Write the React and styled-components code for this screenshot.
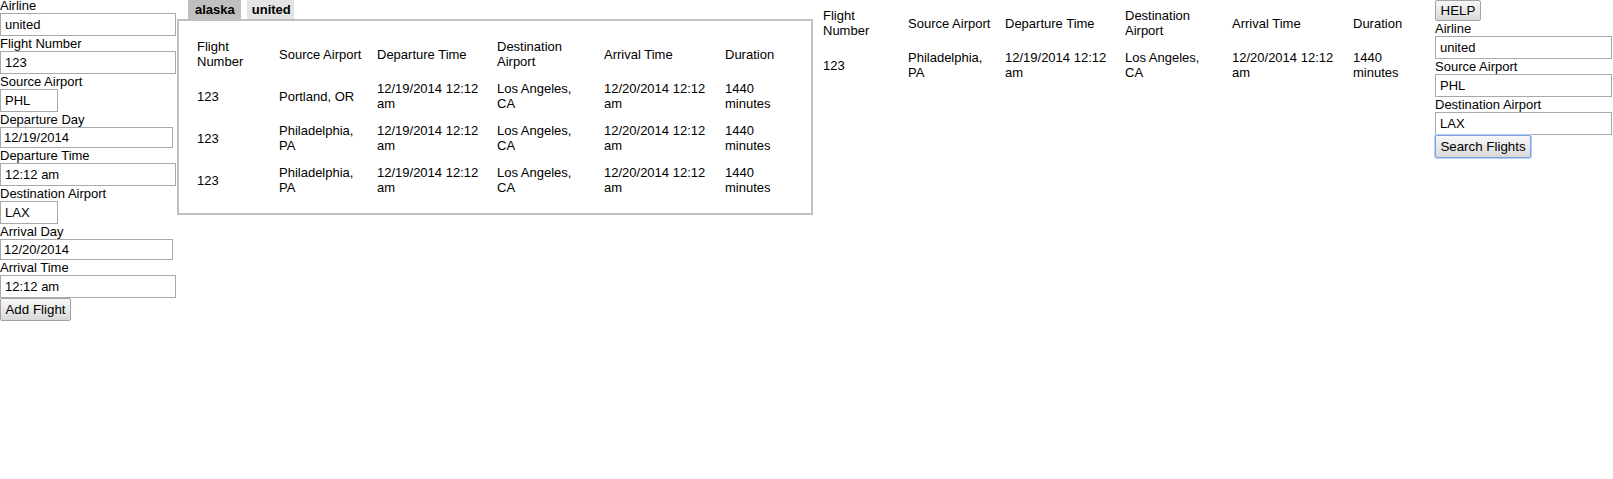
import React from "react";
import styled, { createGlobalStyle } from "styled-components";

const Global = createGlobalStyle`
  html, body { margin: 0; padding: 0; background: #fff; }
  body {
    font-family: "Liberation Sans", Arial, sans-serif;
    font-size: 13px;
    color: #000;
  }
`;

const Page = styled.div`
  display: flex;
  align-items: flex-start;
  width: 1613px;
`;

const FormColumn = styled.div`
  display: flex;
  flex-direction: column;
  align-items: flex-start;
  width: ${(p) => p.$width}px;
  margin-top: ${(p) => p.$top || 0}px;
  flex: none;
`;

const Label = styled.label`
  display: block;
  height: 15px;
  line-height: 15px;
  font-size: 13px;
  white-space: nowrap;
`;

const Input = styled.input`
  box-sizing: border-box;
  display: block;
  width: ${(p) => p.$w}px;
  height: ${(p) => p.$h || 23}px;
  margin: 0;
  padding: 0 ${(p) => p.$pad ?? 4}px;
  border: 1px solid #a9a9a9;
  border-radius: 0;
  background: #fff;
  font-family: "Liberation Sans", Arial, sans-serif;
  font-size: 13px;
  color: #000;
  outline: none;
`;

const Button = styled.button`
  box-sizing: border-box;
  height: ${(p) => p.$h || 22}px;
  width: ${(p) => p.$w}px;
  margin: 0;
  padding: 0;
  border: 1px solid ${(p) => (p.$focused ? "#7da2e0" : "#a3a3a3")};
  border-radius: 2px;
  background: linear-gradient(#f7f7f7, #e6e6e6 60%, #d8d8d8);
  box-shadow: ${(p) => (p.$focused ? "0 0 0 1px #b8cff2" : "none")};
  font-family: "Liberation Sans", Arial, sans-serif;
  font-size: 13.33px;
  color: #000;
  text-align: center;
`;

const TabWidget = styled.div`
  margin-left: 1px;
  width: 636px;
  flex: none;
`;

const TabBar = styled.div`
  display: flex;
  gap: 6px;
  padding-left: 11px;
  height: 19px;
`;

const Tab = styled.div`
  height: 19px;
  line-height: 19px;
  padding: 0 ${(p) => p.$pr}px 0 ${(p) => p.$pl}px;
  font-weight: bold;
  font-size: 13px;
  background: ${(p) => (p.$active ? "#bfbfbf" : "#e4e4e4")};
`;

const Panel = styled.div`
  border: 2px solid #c0c0c0;
  padding: 12px;
`;

const Table = styled.table`
  border-collapse: collapse;
  table-layout: fixed;
  width: ${(p) => p.$w}px;
  margin-top: ${(p) => p.$top || 0}px;
  margin-left: ${(p) => p.$left || 0}px;
  flex: none;
`;

const Cell = styled.td`
  padding: 6px;
  height: 30px;
  line-height: 15px;
  font-size: 13px;
  text-align: left;
  vertical-align: middle;
  font-weight: normal;
`;

const HeadCell = styled(Cell).attrs({ as: "th" })``;

const headers = [
  "Flight Number",
  "Source Airport",
  "Departure Time",
  "Destination Airport",
  "Arrival Time",
  "Duration",
];

const alaskaRows = [
  ["123", "Portland, OR", "12/19/2014 12:12 am", "Los Angeles, CA", "12/20/2014 12:12 am", "1440 minutes"],
  ["123", "Philadelphia, PA", "12/19/2014 12:12 am", "Los Angeles, CA", "12/20/2014 12:12 am", "1440 minutes"],
  ["123", "Philadelphia, PA", "12/19/2014 12:12 am", "Los Angeles, CA", "12/20/2014 12:12 am", "1440 minutes"],
];

const searchRows = [
  ["123", "Philadelphia, PA", "12/19/2014 12:12 am", "Los Angeles, CA", "12/20/2014 12:12 am", "1440 minutes"],
];

function FlightTable({ cols, rows, width, top, left }) {
  return (
    <Table $w={width} $top={top} $left={left}>
      <colgroup>
        {cols.map((w, i) => (
          <col key={i} style={{ width: w }} />
        ))}
      </colgroup>
      <thead>
        <tr>
          {headers.map((h) => (
            <HeadCell key={h}>{h}</HeadCell>
          ))}
        </tr>
      </thead>
      <tbody>
        {rows.map((r, i) => (
          <tr key={i}>
            {r.map((c, j) => (
              <Cell key={j}>{c}</Cell>
            ))}
          </tr>
        ))}
      </tbody>
    </Table>
  );
}

function Field({ label, value, w, h, pad }) {
  return (
    <>
      <Label>{label}</Label>
      <Input defaultValue={value} $w={w} $h={h} $pad={pad} />
    </>
  );
}

export default function App() {
  return (
    <>
      <Global />
      <Page>
        <FormColumn $width={176} $top={-2}>
          <Field label="Airline" value="united" w={176} />
          <Field label="Flight Number" value="123" w={176} />
          <Field label="Source Airport" value="PHL" w={58} />
          <Field label="Departure Day" value="12/19/2014" w={173} h={21} pad={3} />
          <Field label="Departure Time" value="12:12 am" w={176} />
          <Field label="Destination Airport" value="LAX" w={58} />
          <Field label="Arrival Day" value="12/20/2014" w={173} h={21} pad={3} />
          <Field label="Arrival Time" value="12:12 am" w={176} />
          <Button $w={71} $h={23}>Add Flight</Button>
        </FormColumn>

        <TabWidget>
          <TabBar>
            <Tab $active $pl={7} $pr={6}>alaska</Tab>
            <Tab $pl={5} $pr={3}>united</Tab>
          </TabBar>
          <Panel>
            <FlightTable
              cols={[82, 98, 120, 107, 121, 80]}
              width={608}
              rows={alaskaRows}
            />
          </Panel>
        </TabWidget>

        <FlightTable
          cols={[85, 97, 120, 107, 121, 88]}
          width={618}
          top={2}
          left={4}
          rows={searchRows}
        />

        <FormColumn $width={178}>
          <Button $w={46} $h={21}>HELP</Button>
          <Field label="Airline" value="united" w={177} />
          <Field label="Source Airport" value="PHL" w={177} />
          <Field label="Destination Airport" value="LAX" w={177} />
          <Button $w={96} $h={23} $focused>Search Flights</Button>
        </FormColumn>
      </Page>
    </>
  );
}
